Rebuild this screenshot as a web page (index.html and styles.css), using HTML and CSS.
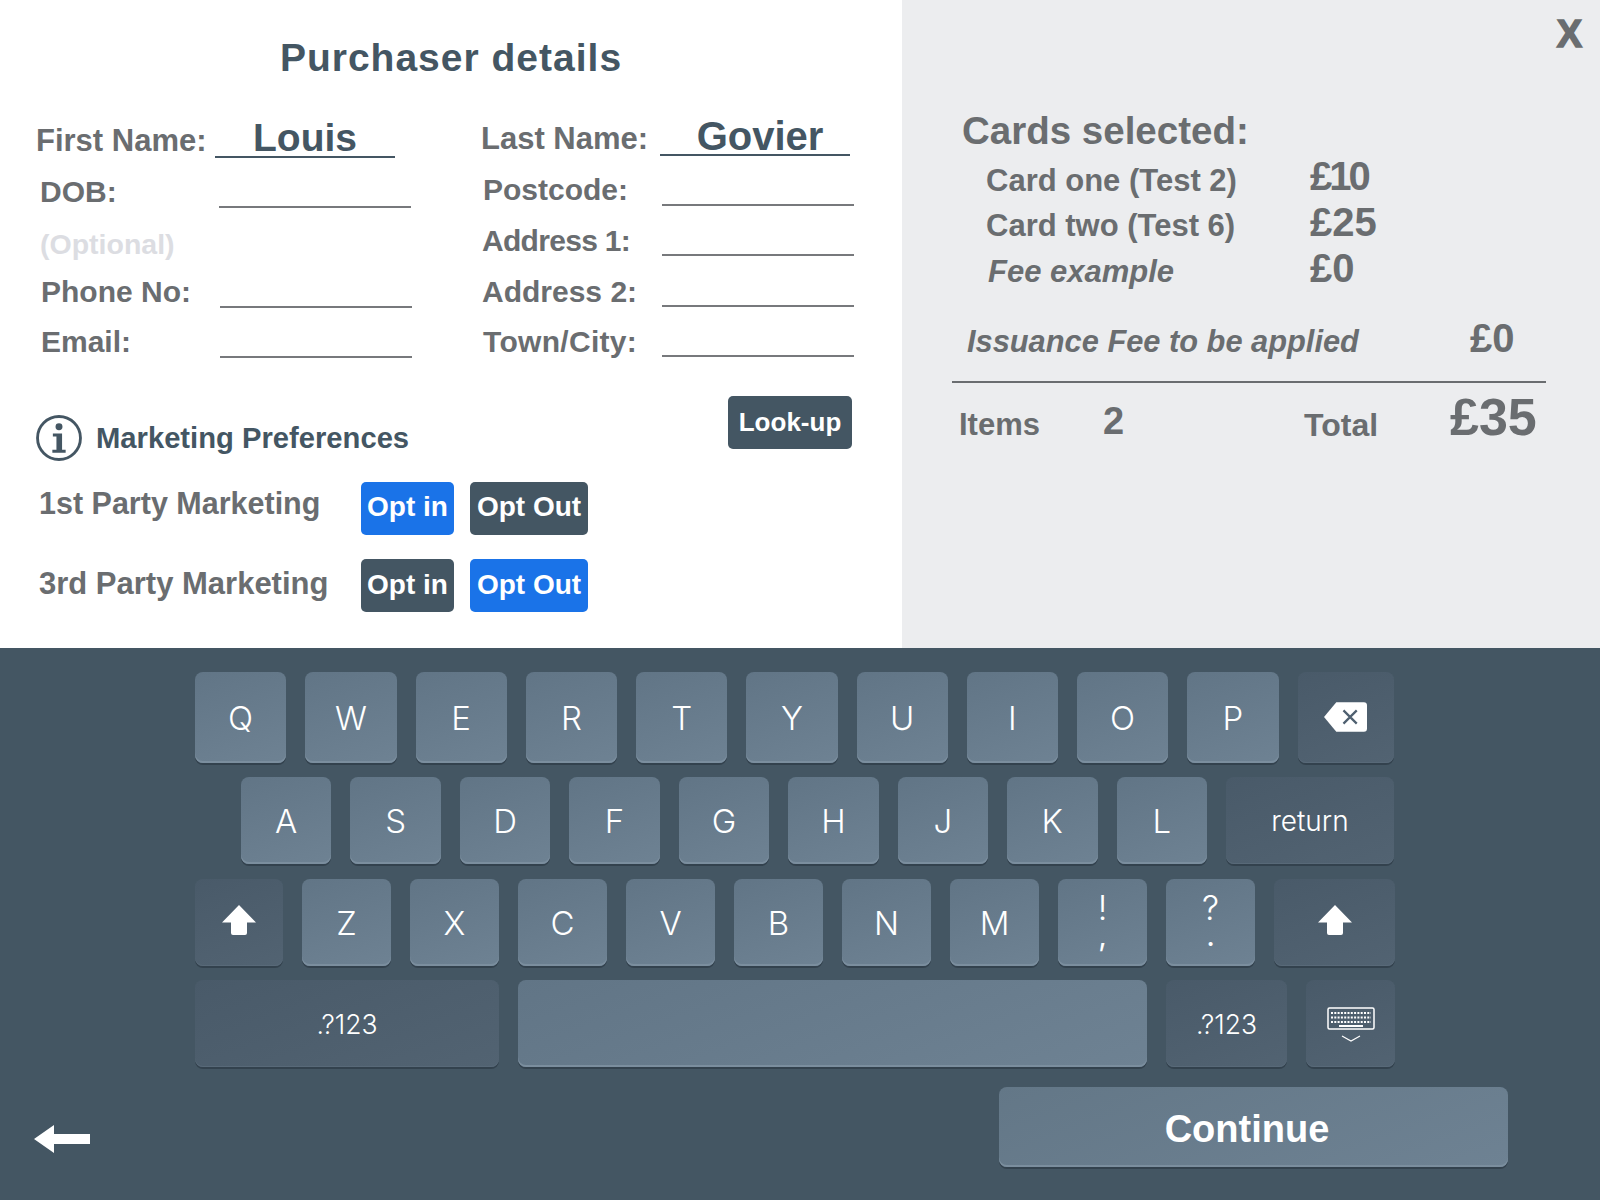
FILE: index.html
```html
<!DOCTYPE html>
<html lang="en">
<head>
<meta charset="utf-8">
<title>Purchaser details</title>
<link rel="stylesheet" href="styles.css">
</head>
<body>
<div class="app">
  <div class="top">
    <section class="details">
      <h1 class="details-title">Purchaser details</h1>
      <div class="form">
        <div class="form-left">
          <div class="row"><span class="label label-name">First Name:</span><span class="field field-filled field-first">Louis</span></div>
          <div class="row inset-4"><span class="label">DOB:</span><span class="field"></span></div>
          <div class="row inset-4"><span class="label label-optional">(Optional)</span></div>
          <div class="row inset-5"><span class="label">Phone No:</span><span class="field"></span></div>
          <div class="row inset-5"><span class="label">Email:</span><span class="field"></span></div>
          <div class="prefs">
            <svg class="info-icon" viewBox="0 0 45 45" aria-hidden="true">
              <circle cx="22.5" cy="22.5" r="21" fill="none" stroke="#445663" stroke-width="2.8"/>
              <circle cx="22.5" cy="11.5" r="3.4" fill="#445663"/>
              <path d="M16.500 18h9v16h3.500v3h-13v-3H20V21h-3.500z" fill="#445663"/>
            </svg>
            <span class="prefs-title">Marketing Preferences</span>
          </div>
          <div class="opt-row opt-row-first">
            <span class="opt-label">1st Party Marketing</span>
            <button class="btn btn-blue btn-in">Opt in</button>
            <button class="btn btn-dark btn-out">Opt Out</button>
          </div>
          <div class="opt-row opt-row-second">
            <span class="opt-label">3rd Party Marketing</span>
            <button class="btn btn-dark btn-in">Opt in</button>
            <button class="btn btn-blue btn-out">Opt Out</button>
          </div>
        </div>
        <div class="form-right">
          <div class="row"><span class="label label-name">Last Name:</span><span class="field field-filled field-last">Govier</span></div>
          <div class="row inset-2"><span class="label">Postcode:</span><span class="field"></span></div>
          <div class="row inset-1"><span class="label label-wider label-low label-tight">Address 1:</span><span class="field"></span></div>
          <div class="row row-tall inset-1"><span class="label label-wider label-low">Address 2:</span><span class="field"></span></div>
          <div class="row inset-2"><span class="label label-low label-loose">Town/City:</span><span class="field"></span></div>
          <button class="btn btn-dark btn-lookup">Look-up</button>
        </div>
      </div>
    </section>
    <aside class="summary">
      <div class="close">X</div>
      <h2 class="summary-title">Cards selected:</h2>
      <div class="line line-first"><span class="line-name">Card one (Test 2)</span><span class="line-amount amount-tight">£10</span></div>
      <div class="line"><span class="line-name">Card two (Test 6)</span><span class="line-amount">£25</span></div>
      <div class="line"><span class="line-name line-fee">Fee example</span><span class="line-amount">£0</span></div>
      <div class="issuance"><span class="issuance-name">Issuance Fee to be applied</span><span class="line-amount">£0</span></div>
      <div class="rule"></div>
      <div class="totals">
        <span class="totals-items">Items</span>
        <span class="totals-count">2</span>
        <span class="totals-total">Total</span>
        <span class="totals-amount">£35</span>
      </div>
    </aside>
  </div>
  <div class="bottom">
    <div class="keys">
      <div class="key-row key-row-1">
        <div class="key">Q</div><div class="key">W</div><div class="key">E</div><div class="key">R</div><div class="key">T</div><div class="key">Y</div><div class="key">U</div><div class="key">I</div><div class="key">O</div><div class="key">P</div>
        <div class="key key-dark key-back">
          <svg class="icon-back" viewBox="0 0 44 32" aria-hidden="true">
            <path d="M13 1h27a3 3 0 0 1 3 3v23a3 3 0 0 1-3 3H13L1 15.500z" fill="#fff"/>
            <path d="M20 9l13 13M33 9L20 22" stroke="#4f6070" stroke-width="2.200" fill="none"/>
          </svg>
        </div>
      </div>
      <div class="key-row key-row-2">
        <div class="key">A</div><div class="key">S</div><div class="key">D</div><div class="key">F</div><div class="key">G</div><div class="key">H</div><div class="key">J</div><div class="key">K</div><div class="key">L</div>
        <div class="key key-dark key-return">return</div>
      </div>
      <div class="key-row key-row-3">
        <div class="key key-dark key-shift-l"><svg class="icon-shift" viewBox="0 0 36 32" aria-hidden="true"><path d="M18 1l17 17.500H26V29a2 2 0 0 1-2 2H12a2 2 0 0 1-2-2V18.500H1z" fill="#fff"/></svg></div>
        <div class="key">Z</div><div class="key">X</div><div class="key">C</div><div class="key">V</div><div class="key">B</div><div class="key">N</div><div class="key">M</div>
        <div class="key key-stack"><span class="stack-top">!</span><span class="stack-bottom">,</span></div>
        <div class="key key-stack"><span class="stack-top">?</span><span class="stack-bottom">.</span></div>
        <div class="key key-dark key-shift-r"><svg class="icon-shift" viewBox="0 0 36 32" aria-hidden="true"><path d="M18 1l17 17.500H26V29a2 2 0 0 1-2 2H12a2 2 0 0 1-2-2V18.500H1z" fill="#fff"/></svg></div>
      </div>
      <div class="key-row key-row-4">
        <div class="key key-dark key-num key-num-wide">.?123</div>
        <div class="key key-space"></div>
        <div class="key key-dark key-num key-num-narrow">.?123</div>
        <div class="key key-dark key-hide">
          <svg class="icon-keyboard" viewBox="0 0 48 38" aria-hidden="true">
            <rect x="1" y="1" width="46" height="21" rx="1.500" fill="none" stroke="#fff" stroke-width="1.500"/>
            <path d="M4 6h40M4 10.500h40M4 15h40" stroke="#fff" stroke-width="2" stroke-dasharray="2 1.300" fill="none"/>
            <path d="M12 19h24" stroke="#fff" stroke-width="2" fill="none"/>
            <path d="M15 29l9 5 9-5" stroke="#fff" stroke-width="1.200" fill="none"/>
          </svg>
        </div>
      </div>
    </div>
    <div class="footer">
      <svg class="arrow" viewBox="0 0 56 28" aria-hidden="true"><path d="M0 14L20 0v9h36v10H20v9z" fill="#fff"/></svg>
      <button class="continue">Continue</button>
    </div>
  </div>
</div>
</body>
</html>
```
FILE: styles.css
```css
* { box-sizing: border-box; }
html, body { margin: 0; padding: 0; }
body { font-family: "Liberation Sans", Arial, sans-serif; background: #445663; }
.app { width: 1600px; height: 1200px; display: flex; flex-direction: column; overflow: hidden; }
.top { height: 648px; display: flex; }

.details { width: 902px; background: #fff; padding-top: 36px; }
.details-title { margin: 0; height: 44px; line-height: 44px; font-size: 39px; font-weight: 700; letter-spacing: 1px; color: #445663; text-align: center; }
.form { display: flex; margin-top: 28px; }
.form-left { width: 481px; padding-left: 36px; flex: none; }
.form-right { width: 371px; margin-top: -2px; display: flex; flex-direction: column; flex: none; }

.row { display: flex; align-items: flex-end; height: 50px; }
.row-tall { height: 51px; }
.inset-1 { margin-left: 1px; }
.inset-2 { margin-left: 2px; }
.inset-4 { margin-left: 4px; }
.inset-5 { margin-left: 5px; }
.label { width: 179px; flex: none; height: 30px; line-height: 30px; margin-bottom: 1px; font-size: 30px; font-weight: 700; color: #6a6d70; white-space: nowrap; }
.label-name { font-size: 31px; margin-bottom: 2px; }
.label-optional { color: #dcdde2; width: auto; font-size: 28.500px; margin-bottom: -1px; }
.label-wider { width: 180px; }
.label-low { margin-bottom: 0; }
.label-tight { letter-spacing: -0.7px; }
.label-loose { letter-spacing: 0.3px; }
.field { width: 192px; height: 44px; border-bottom: 2px solid #77797c; display: block; flex: none; }
.field-filled { border-bottom-color: #445663; color: #445663; font-size: 39px; font-weight: 700; line-height: 48px; text-align: center; }
.field-first { width: 180px; }
.field-last { width: 190px; padding-left: 10px; font-size: 40px; }

.prefs { display: flex; align-items: center; height: 45px; margin-top: 57px; }
.info-icon { width: 46px; height: 46px; flex: none; }
.prefs-title { margin-left: 14px; font-size: 29.200px; font-weight: 700; color: #445663; white-space: nowrap; padding-top: 2px; }

.opt-row { display: flex; height: 53px; margin-left: 3px; }
.opt-row-first { margin-top: 22px; }
.opt-row-second { margin-top: 24px; }
.opt-label { width: 322px; flex: none; font-size: 31px; font-weight: 700; color: #6a6d70; white-space: nowrap; }
.opt-row-first .opt-label { line-height: 43px; font-size: 30.500px; }
.opt-row-second .opt-label { line-height: 50px; }
.btn { border: 0; padding: 0; border-radius: 5px; color: #fff; font: 700 28px/1 "Liberation Sans", Arial, sans-serif; height: 53px; text-align: center; white-space: nowrap; flex: none; }
.opt-row-first .btn { padding-bottom: 3px; }
.opt-row-second .btn { padding-bottom: 1px; }
.btn-blue { background: #1a73e8; }
.btn-dark { background: #445663; }
.btn-in { width: 93px; }
.btn-out { width: 118px; margin-left: 16px; }
.btn-lookup { width: 124px; align-self: flex-end; margin-top: 39px; font-size: 26px; padding-bottom: 2px; }

.summary { flex: 1; background: #ecedef; padding: 109px 0 0 50px; position: relative; color: #6a6d70; }
.close { position: absolute; top: 14px; right: 18px; font-size: 38px; line-height: 40px; font-weight: 700; color: #6a6d70; -webkit-text-stroke: 1.500px #6a6d70; }
.summary-title { margin: 0 0 5px 10px; height: 44px; line-height: 44px; font-size: 38.500px; font-weight: 700; white-space: nowrap; }
.line { display: flex; align-items: center; height: 46px; margin-left: 34px; }
.line-first { height: 45px; }
.line-name { width: 324px; font-size: 31px; font-weight: 700; white-space: nowrap; }
.line-fee { font-style: italic; padding-left: 2px; }
.line-amount { font-size: 40px; font-weight: 700; line-height: 42px; padding-bottom: 9px; }
.amount-tight { letter-spacing: -3px; }
.issuance { display: flex; align-items: center; height: 46px; margin: 24px 0 16px 15px; }
.issuance-name { width: 503px; font-size: 30.800px; font-weight: 700; font-style: italic; white-space: nowrap; }
.rule { width: 594px; height: 2px; background: #6a6d70; }
.totals { display: flex; align-items: center; height: 48px; margin: 18px 0 0 7px; }
.totals-items { width: 144px; font-size: 31px; font-weight: 700; }
.totals-count { width: 201px; font-size: 38px; font-weight: 700; padding-bottom: 8px; }
.totals-total { width: 146px; font-size: 32px; font-weight: 700; }
.totals-amount { font-size: 52px; font-weight: 700; line-height: 52px; padding-bottom: 16px; }

.bottom { flex: 1; padding-top: 24px; }
.keys { width: 1199px; margin-left: 195px; display: flex; flex-direction: column; }
.key-row { display: flex; gap: 19px; height: 87px; margin-top: 14px; }
.key-row-1 { height: 91px; margin-top: 0; }
.key-row-2 { padding-left: 46px; }
.key-row-3 { margin-top: 15px; }
.key { flex: 1 1 0; min-width: 0; display: flex; align-items: center; justify-content: center; border-radius: 8px; color: #fff; font-family: Inter, "Liberation Sans", sans-serif; font-weight: 300; font-size: 33px; background: linear-gradient(160deg, #617586, #6e8293); box-shadow: inset 0 -2px 0 #7b8e9e, 0 2px 0 #33424e; }
.key-dark { background: linear-gradient(160deg, #495a69, #526372); box-shadow: inset 0 -1px 0 #586978, 0 2px 0 #33424e; }
.key-row-1 .key { flex: 0 0 91.250px; }
.key-row-1 .key-back { flex: 0 0 96.500px; }
.key-row-2 .key { flex: 0 0 90.440px; }
.key-row-2 .key-return { flex: 0 0 168px; font-size: 28px; }
.key-row-3 .key { flex: 0 0 89px; }
.key-row-3 .key-shift-l { flex: 0 0 88px; padding-bottom: 5px; }
.key-row-3 .key-shift-r { flex: 0 0 121px; padding-bottom: 5px; }
.key-stack { flex-direction: column; padding-bottom: 6px; }
.stack-top { display: block; height: 30px; line-height: 30px; font-size: 34px; }
.stack-bottom { display: block; height: 24px; line-height: 24px; font-size: 30px; font-weight: 400; }
.key-num { font-size: 26.500px; }
.key-row-4 .key-num-wide { flex: 0 0 304px; }
.key-row-4 .key-space { flex: 0 0 629px; }
.key-row-4 .key-num-narrow { flex: 0 0 121px; }
.key-row-4 .key-hide { flex: 0 0 89px; padding-top: 4px; }
.icon-back { width: 45px; height: 33px; }
.icon-shift { width: 36px; height: 32px; }
.icon-keyboard { width: 48px; height: 38px; }

.footer { display: flex; align-items: flex-start; margin-top: 20px; padding-left: 34px; }
.arrow { width: 56px; height: 28px; margin-top: 38px; flex: none; }
.continue { width: 509px; height: 80px; margin-left: 909px; border: 0; border-radius: 8px; color: #fff; background: linear-gradient(160deg, #637787, #6e8293); box-shadow: inset 0 -2px 0 #7b8e9e, 0 2px 0 #33424e; font: 700 38px/1 "Liberation Sans", Arial, sans-serif; padding: 4px 13px 0 0; }
```
